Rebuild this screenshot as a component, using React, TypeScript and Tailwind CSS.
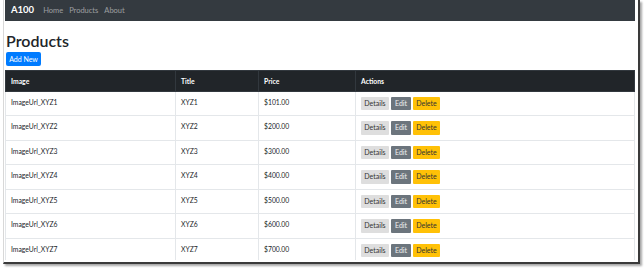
import React from 'react';

const products = [1, 2, 3, 4, 5, 6, 7].map((n) => ({
  image: `ImageUrl_XYZ${n}`,
  title: `XYZ${n}`,
  price: n === 1 ? '$101.00' : `$${n}00.00`,
}));

const App: React.FC = () => {
  return (
    <div className="w-[644px] h-[268px] bg-white overflow-hidden" style={{ fontFamily: 'Lato, "Noto Sans", sans-serif' }}>
      <div className="ml-[3px] w-[637px] h-[264px] border-l border-l-[#d8d8d8] border-r-2 border-b-2 border-r-[#3a3a3a] border-b-[#3a3a3a] pl-px pr-[2px] pb-[2px] shadow-[2px_2px_2px_rgba(0,0,0,0.35)]">
        <div className="w-[630px] h-[260px] overflow-hidden">
          <nav className="h-[21px] bg-[#343a40] flex items-center px-[6px]">
            <span className="text-white text-[9.5px] font-bold mr-[9px]">A100</span>
            <div className="flex gap-[6px] text-[7.5px] text-white/50">
              <span>Home</span>
              <span>Products</span>
              <span>About</span>
            </div>
          </nav>

          <div className="pl-px">
            <h1 className="text-[16px] font-semibold text-[#212529] leading-none mt-[12px] mb-[3px]">Products</h1>
            <button className="block h-[14px] w-[35px] bg-[#007bff] text-white text-[7px] rounded-[2px] leading-none">
              Add New
            </button>
          </div>

          <table className="w-full mt-[4px] border-collapse text-[6.8px] leading-[10.5px] text-[#212529]">
            <thead>
              <tr className="bg-[#212529] text-white font-bold text-left">
                <th className="w-[170px] px-[5px] py-[4.5px] border border-[#32383e]">Image</th>
                <th className="w-[83px] px-[5px] py-[4.5px] border border-[#32383e]">Title</th>
                <th className="w-[97px] px-[5px] py-[4.5px] border border-[#32383e]">Price</th>
                <th className="px-[5px] py-[4.5px] border border-[#32383e]">Actions</th>
              </tr>
            </thead>
            <tbody>
              {products.map((p) => (
                <tr key={p.title}>
                  <td className="p-[5px] align-top border border-[#e4e7ea]">{p.image}</td>
                  <td className="p-[5px] align-top border border-[#e4e7ea]">{p.title}</td>
                  <td className="p-[5px] align-top border border-[#e4e7ea]">{p.price}</td>
                  <td className="px-[5px] py-[5px] align-top border border-[#e4e7ea]">
                    <div className="flex gap-[2px] h-[13.5px]">
                      <button className="w-[28px] bg-[#dedede] text-[#333] text-[7px] rounded-[1px] leading-none">Details</button>
                      <button className="w-[20px] bg-[#6c757d] text-white/90 text-[7px] rounded-[1px] leading-none">Edit</button>
                      <button className="w-[27px] bg-[#ffc107] text-[#333] text-[7px] rounded-[1px] leading-none">Delete</button>
                    </div>
                  </td>
                </tr>
              ))}
            </tbody>
          </table>
        </div>
      </div>
    </div>
  );
};

export default App;
